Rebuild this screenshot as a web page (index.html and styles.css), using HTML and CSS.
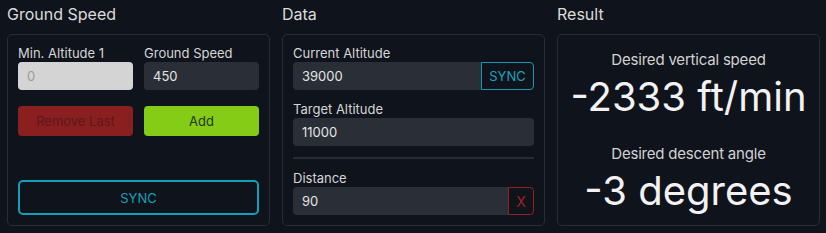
FILE: index.html
```html
<!DOCTYPE html>
<html lang="en">
<head>
  <meta charset="UTF-8">
  <meta name="viewport" content="width=device-width, initial-scale=1.0">
  <title>Descent Calculator</title>
  <link rel="stylesheet" href="styles.css">
</head>
<body>
  <div class="columns">
    <!-- Ground speed -->
    <section class="column">
      <h2 class="column-title">Ground Speed</h2>
      <div class="panel panel-speed">
        <div class="pair">
          <div class="field">
            <label for="minAlt">Min. Altitude 1</label>
            <input type="text" id="minAlt" class="input input-disabled" value="0" disabled>
          </div>
          <div class="field">
            <label for="groundSpeed">Ground Speed</label>
            <input type="text" id="groundSpeed" class="input" value="450">
          </div>
        </div>
        <div class="pair actions">
          <button class="btn btn-remove">Remove Last</button>
          <button class="btn btn-add">Add</button>
        </div>
        <button class="btn btn-sync">SYNC</button>
      </div>
    </section>

    <!-- Data -->
    <section class="column">
      <h2 class="column-title">Data</h2>
      <div class="panel panel-data">
        <div class="field">
          <label for="currentAlt">Current Altitude</label>
          <div class="input-row">
            <input type="text" id="currentAlt" class="input" value="39000">
            <button class="addon addon-sync">SYNC</button>
          </div>
        </div>
        <div class="field">
          <label for="targetAlt">Target Altitude</label>
          <input type="text" id="targetAlt" class="input" value="11000">
        </div>
        <hr class="divider">
        <div class="field">
          <label for="distance">Distance</label>
          <div class="input-row">
            <input type="text" id="distance" class="input" value="90">
            <button class="addon addon-clear">X</button>
          </div>
        </div>
      </div>
    </section>

    <!-- Result -->
    <section class="column">
      <h2 class="column-title">Result</h2>
      <div class="panel panel-result">
        <div class="result">
          <p class="result-label">Desired vertical speed</p>
          <p class="result-value">-2333 ft/min</p>
        </div>
        <div class="result">
          <p class="result-label">Desired descent angle</p>
          <p class="result-value">-3 degrees</p>
        </div>
      </div>
    </section>
  </div>
</body>
</html>
```
FILE: styles.css
```css
/* General */
* {
  margin: 0;
  padding: 0;
  box-sizing: border-box;
  font-family: 'Inter', 'Noto Sans', sans-serif;
}

body {
  background: #0f131b;
  color: #e2e2e2;
  padding: 4px 7px;
}

.columns {
  display: grid;
  grid-template-columns: repeat(3, 263px);
  column-gap: 12px;
}

.column-title {
  font-size: 16px;
  line-height: 20px;
  font-weight: 400;
  color: #dcdcdc;
  margin-bottom: 10px;
}

.panel {
  height: 192px;
  border: 1px solid #272c35;
  border-radius: 5px;
  padding: 10px;
}

/* Fields */
.field label {
  display: block;
  font-size: 13px;
  line-height: 16px;
  color: #d6d6d6;
  margin-bottom: 1px;
}

.input {
  width: 100%;
  height: 28px;
  border: none;
  border-radius: 4px;
  background: #2a2e37;
  color: #e4e4e4;
  font-size: 13px;
  padding: 0 9px;
  outline: none;
}

.input-disabled {
  background: #d4d4d4;
  color: #9a9a9a;
}

.input-row {
  display: flex;
  height: 28px;
}

.input-row .input {
  flex: 1;
  border-radius: 4px 0 0 4px;
}

.addon {
  height: 28px;
  background: #0f131b;
  border-radius: 0 4px 4px 0;
  font-size: 13px;
  cursor: pointer;
}

.addon-sync {
  width: 53px;
  border: 1.5px solid #1499b2;
  color: #1aa3bb;
}

.addon-clear {
  width: 26px;
  border: 1.5px solid #9b1d1f;
  color: #a3201f;
  font-size: 14px;
}

/* Ground speed panel */
.panel-speed {
  display: flex;
  flex-direction: column;
}

.pair {
  display: grid;
  grid-template-columns: 1fr 1fr;
  column-gap: 11px;
}

.actions {
  margin-top: 16px;
}

.btn {
  height: 30px;
  border: none;
  border-radius: 4px;
  font-size: 13px;
  cursor: pointer;
}

.btn-remove {
  background: #8a1f20;
  color: #5e1718;
}

.btn-add {
  background: #84cc16;
  color: #253310;
}

.btn-sync {
  margin-top: auto;
  height: 35px;
  background: transparent;
  border: 2px solid #12a0ba;
  border-radius: 5px;
  color: #1aa0b6;
}

/* Data panel */
.panel-data .field + .field {
  margin-top: 11px;
}

.divider {
  border: none;
  height: 2px;
  background: #272b33;
  margin: 11px 0;
}

/* Result panel */
.panel-result {
  display: flex;
  flex-direction: column;
  text-align: center;
  padding-top: 15px;
}

.result + .result {
  margin-top: 25px;
}

.result-label {
  font-size: 15px;
  line-height: 20px;
  letter-spacing: -0.2px;
  color: #d2d2d2;
}

.result-value {
  font-size: 40px;
  line-height: 44px;
  margin-top: 5px;
  color: #f2f2f2;
}
```
